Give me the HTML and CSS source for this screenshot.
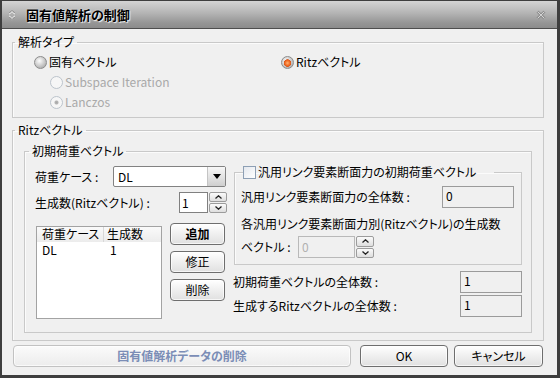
FILE: index.html
```html
<!DOCTYPE html>
<html lang="ja">
<head>
    <meta charset="UTF-8">
    <title>固有値解析の制御</title>
    <link rel="stylesheet" href="styles.css">
</head>
<body>

<div class="window">
    <!-- Title bar -->
    <div class="titlebar">
        <svg class="title-icon" width="10" height="12" viewBox="0 0 10 12">
            <path d="M2 5 L5 2 L8 5" fill="none" stroke="#f4f4f4" stroke-width="1.6"/>
            <path d="M2 7 L5 10 L8 7" fill="none" stroke="#f4f4f4" stroke-width="1.6"/>
            <path d="M2 4.4 L5 1.4 L8 4.4" fill="none" stroke="#6a6a6a" stroke-width="1"/>
            <path d="M2 7.6 L5 10.6 L8 7.6" fill="none" stroke="#6a6a6a" stroke-width="1"/>
        </svg>
        <span class="title">固有値解析の制御</span>
        <svg class="close-icon" width="10" height="10" viewBox="0 0 10 10">
            <path d="M1.5 1.5 L8.5 8.5 M8.5 1.5 L1.5 8.5" stroke="#5e5e5e" stroke-width="2.4"/>
            <path d="M1.5 1.5 L8.5 8.5 M8.5 1.5 L1.5 8.5" stroke="#d4d4d4" stroke-width="1.2"/>
        </svg>
    </div>

    <div class="content">
        <!-- Analysis type -->
        <fieldset class="group type-group">
            <legend>解析タイプ</legend>
            <div class="type-body">
                <div class="radio-row">
                    <div class="radio"><span class="dot sphere"></span>固有ベクトル</div>
                    <div class="radio"><span class="dot sphere on"></span>Ritzベクトル</div>
                </div>
                <div class="radio disabled sub"><span class="dot off"></span>Subspace Iteration</div>
                <div class="radio disabled sub"><span class="dot off checked"></span>Lanczos</div>
            </div>
        </fieldset>

        <!-- Ritz vectors -->
        <fieldset class="group ritz-group">
            <legend>Ritzベクトル</legend>
            <div class="ritz-body">
                <fieldset class="group load-group">
                    <legend>初期荷重ベクトル</legend>
                    <div class="load-body">
                        <div class="left-col">
                            <div class="field-row case-row">
                                <span class="case-label">荷重ケース :</span>
                                <div class="combo">
                                    <span class="combo-text">DL</span>
                                    <span class="combo-btn">
                                        <svg width="8" height="5" viewBox="0 0 8 5"><path d="M0 0 H8 L4 5 Z" fill="#000"/></svg>
                                    </span>
                                </div>
                            </div>
                            <div class="field-row count-row">
                                <span class="count-label">生成数(Ritzベクトル) :</span>
                                <div class="spin">
                                    <span class="spin-field">1</span>
                                    <span class="spin-btns">
                                        <span class="spin-btn"><svg width="7" height="4" viewBox="0 0 7 4"><path d="M0.5 3.5 L3.5 0.8 L6.5 3.5" fill="none" stroke="#222" stroke-width="1.3"/></svg></span>
                                        <span class="spin-btn"><svg width="7" height="4" viewBox="0 0 7 4"><path d="M0.5 0.5 L3.5 3.2 L6.5 0.5" fill="none" stroke="#222" stroke-width="1.3"/></svg></span>
                                    </span>
                                </div>
                            </div>
                            <div class="list-row-wrap">
                                <div class="listbox">
                                    <div class="list-head">
                                        <span class="col-case">荷重ケース</span>
                                        <span class="col-num">生成数</span>
                                    </div>
                                    <div class="list-item">
                                        <span class="col-case">DL</span>
                                        <span class="col-num">1</span>
                                    </div>
                                </div>
                                <div class="list-buttons">
                                    <button class="btn bold">追加</button>
                                    <button class="btn">修正</button>
                                    <button class="btn">削除</button>
                                </div>
                            </div>
                        </div>

                        <div class="right-col">
                            <fieldset class="group link-group">
                                <legend><span class="checkbox"></span>汎用リンク要素断面力の初期荷重ベクトル</legend>
                                <div class="link-body">
                                    <div class="field-row link-total">
                                        <span>汎用リンク要素断面力の全体数 :</span>
                                        <span class="textbox link-box">0</span>
                                    </div>
                                    <div class="link-note">各汎用リンク要素断面力別(Ritzベクトル)の生成数</div>
                                    <div class="field-row vector-row">
                                        <span class="vector-label">ベクトル :</span>
                                        <div class="spin">
                                            <span class="spin-field vector-field">0</span>
                                            <span class="spin-btns">
                                                <span class="spin-btn"><svg width="7" height="4" viewBox="0 0 7 4"><path d="M0.5 3.5 L3.5 0.8 L6.5 3.5" fill="none" stroke="#222" stroke-width="1.3"/></svg></span>
                                                <span class="spin-btn"><svg width="7" height="4" viewBox="0 0 7 4"><path d="M0.5 0.5 L3.5 3.2 L6.5 0.5" fill="none" stroke="#222" stroke-width="1.3"/></svg></span>
                                            </span>
                                        </div>
                                    </div>
                                </div>
                            </fieldset>

                            <div class="field-row total-row first">
                                <span>初期荷重ベクトルの全体数 :</span>
                                <span class="textbox total-box">1</span>
                            </div>
                            <div class="field-row total-row">
                                <span>生成するRitzベクトルの全体数 :</span>
                                <span class="textbox total-box">1</span>
                            </div>
                        </div>
                    </div>
                </fieldset>
            </div>
        </fieldset>

        <!-- Bottom buttons -->
        <div class="bottom-buttons">
            <button class="btn delete-data">固有値解析データの削除</button>
            <button class="btn ok">OK</button>
            <button class="btn cancel">キャンセル</button>
        </div>
    </div>
</div>

</body>
</html>
```

FILE: styles.css
```css
* {
    box-sizing: border-box;
}

body {
    margin: 0;
    background: #3a3a3a;
    font-family: "Noto Sans CJK JP", "Liberation Sans", sans-serif;
    font-size: 12px;
    line-height: 14px;
    color: #000;
    font-feature-settings: "palt";
}

.window {
    width: 560px;
    height: 378px;
    background: #f0f0f0;
    border: solid #3e3e3e;
    border-width: 1px 3px 3px 2px;
    display: flex;
    flex-direction: column;
}

/* Title bar */

.titlebar {
    height: 28px;
    flex: none;
    display: flex;
    align-items: center;
    padding-left: 5px;
    background: linear-gradient(#d4d4d4, #b4b4b4 45%, #969696 80%, #8c8c8c);
    border-bottom: 1px solid #4e4e4e;
}

.title-icon {
    margin-top: 1px;
}

.title {
    margin-left: 9px;
    font-size: 13px;
    font-weight: bold;
    text-shadow: 1px 1px 1px rgba(255,255,255,0.85), 0 0 2px rgba(255,255,255,0.6);
}

.close-icon {
    margin-left: auto;
    margin-right: 11px;
    margin-top: 1px;
}

.content {
    flex: 1;
    padding: 6px 13px 0 10px;
}

/* Group boxes */

fieldset.group {
    margin: 0;
    padding: 0 0 0 2px;
    border: 1px solid #c9c9c9;
    box-shadow: inset 1px 1px 0 #fbfbfb;
    min-width: 0;
}

legend {
    padding: 0 3px;
    line-height: 14px;
}

.type-body {
    padding: 3px 0 5px 19px;
}

.radio-row {
    display: grid;
    grid-template-columns: 247px auto;
}

.radio {
    height: 20px;
    display: flex;
    align-items: center;
}

.radio.sub {
    padding-left: 16px;
}

.radio.disabled {
    color: #a9a9a9;
}

.dot {
    width: 13px;
    height: 13px;
    border-radius: 50%;
    margin-right: 2px;
    flex: none;
}

.dot.sphere {
    border: 1px solid #8c8c8c;
    background: radial-gradient(circle at 40% 35%, #fdfdfd 0, #d6d6d6 40%, #9a9a9a 100%);
}

.dot.sphere.on {
    background: radial-gradient(circle at 50% 55%, #ffb070 0, #f06a22 2.5px, #d8561a 3.5px, transparent 4px),
                radial-gradient(circle at 40% 35%, #fdfdfd 0, #d6d6d6 40%, #9a9a9a 100%);
}

.dot.off {
    border: 1px solid #bcc4cc;
    background: #f6f6f6;
}

.dot.off.checked {
    background: radial-gradient(circle, #a8a8a8 0, #b4b4b4 1.5px, #f6f6f6 2.5px);
}

.ritz-group {
    margin-top: 5px !important;
}

.ritz-body {
    padding: 7px 11px 7px 9px;
}

fieldset.load-group {
    padding-left: 4px;
}

.load-body {
    display: flex;
    gap: 7px;
    padding: 0 9px 13px 6px;
}

/* Left column */

.left-col {
    width: 192px;
    flex: none;
}

.field-row {
    display: flex;
    align-items: center;
}

.case-row {
    margin-top: 8px;
    height: 21px;
}

.case-label {
    width: 78px;
}

.combo {
    width: 113px;
    height: 21px;
    display: flex;
    border: 1px solid #828282;
    border-radius: 2px;
    background: #fff;
}

.combo-text {
    flex: 1;
    padding-left: 4px;
    line-height: 19px;
}

.combo-btn {
    width: 18px;
    display: flex;
    align-items: center;
    justify-content: center;
    background: linear-gradient(#f7f7f7, #e4e4e4 50%, #cfcfcf);
    border-left: 1px solid #c4c4c4;
}

.count-row {
    margin-top: 5px;
    height: 21px;
}

.count-label {
    width: 145px;
}

.spin {
    display: flex;
    height: 21px;
}

.spin-field {
    width: 29px;
    border: 1px solid #808080;
    background: #fff;
    padding-left: 2px;
    line-height: 19px;
}

.spin-btns {
    width: 18px;
    display: flex;
    flex-direction: column;
    gap: 1px;
    margin-left: 1px;
}

.spin-btn {
    flex: 1;
    display: flex;
    align-items: center;
    justify-content: center;
    border: 1px solid #9c9c9c;
    border-radius: 2px;
    background: linear-gradient(#fbfbfb, #dedede);
}

.list-row-wrap {
    margin-top: 10px;
    display: flex;
}

.listbox {
    margin: 3px 0 0 1px;
    width: 126px;
    height: 93px;
    border: 1px solid #a3a3a3;
    background: #fff;
}

.list-head {
    display: flex;
    height: 15px;
    background: linear-gradient(#fafafa, #ececec);
}

.list-head .col-case {
    border-right: 1px solid #d8d8d8;
}

.list-item {
    display: flex;
    height: 16px;
    align-items: center;
}

.col-case {
    width: 67px;
    padding-left: 5px;
}

.col-num {
    padding-left: 3px;
}

.list-item .col-num {
    padding-left: 6px;
}

.list-buttons {
    margin-left: 8px;
    display: flex;
    flex-direction: column;
    gap: 6px;
}

.btn {
    font: inherit;
    font-feature-settings: "palt";
    color: #000;
    height: 22px;
    padding: 0;
    border: 1px solid #6e6e6e;
    border-radius: 4px;
    background: linear-gradient(#ffffff, #f1f1f1 45%, #e0e0e0);
    box-shadow: inset 0 0 0 1px rgba(255,255,255,0.7);
}

.list-buttons .btn {
    width: 55px;
}

.btn.bold {
    font-weight: bold;
}

/* Right column */

.right-col {
    width: 288px;
    flex: none;
}

fieldset.link-group {
    margin-top: 7px;
    padding-left: 6px;
}

.link-group legend {
    display: flex;
    align-items: center;
    margin-left: 2px;
    padding: 0 18px 0 0;
}

.checkbox {
    width: 13px;
    height: 13px;
    margin-right: 2px;
    border: 1px solid #8d9fb4;
    background: linear-gradient(135deg, #e4e8ee, #ffffff);
}

.link-body {
    padding: 7px 7px 6px 0;
}

.link-total {
    justify-content: space-between;
    height: 22px;
}

.textbox {
    display: block;
    height: 22px;
    border: 1px solid #9b9b9b;
    background: #f0f0f0;
    padding-left: 3px;
    line-height: 18px;
}

.link-box {
    width: 72px;
}

.link-note {
    margin-top: 9px;
}

.vector-row {
    margin-top: 5px;
    height: 22px;
}

.vector-label {
    width: 57px;
}

.vector-row .spin {
    height: 22px;
}

.vector-field {
    width: 57px;
    background: #f0f0f0;
    border-color: #b9b9b9;
    color: #b0b0b0;
    padding-left: 3px;
}

.total-row {
    margin-left: -1px;
    justify-content: space-between;
    height: 22px;
    margin-top: 2px;
}

.total-row.first {
    margin-top: 6px;
}

.total-box {
    width: 62px;
}

/* Bottom buttons */

.bottom-buttons {
    display: flex;
    margin-top: 4px;
    padding: 0 1px;
}

.delete-data {
    width: 338px;
    font-weight: bold;
    color: #7b8db6;
    border-color: #c2c2c2;
    background: linear-gradient(#fbfbfb, #ececec);
}

.ok {
    width: 88px;
    margin-left: 9px;
}

.cancel {
    width: 89px;
    margin-left: 6px;
}
```
